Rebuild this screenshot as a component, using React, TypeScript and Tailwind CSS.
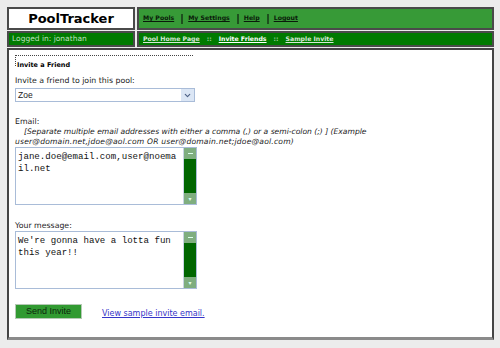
import { ChevronDown } from 'lucide-react'

const navLinks = ['My Pools', 'My Settings', 'Help', 'Logout']

function FakeScrollbar() {
  return (
    <div className="flex w-[13px] flex-col border-l border-[#c8d4e4] bg-[#006600]">
      <div className="flex h-[11px] items-center justify-center bg-[#7fae7f]">
        <div className="h-[1px] w-[5px] bg-[#dfe]" />
      </div>
      <div className="flex-1" />
      <div className="flex h-[11px] items-center justify-center bg-[#7fae7f] text-[6px] leading-none text-[#dfe]">
        ▾
      </div>
    </div>
  )
}

function FakeTextarea({ lines }: { lines: string[] }) {
  return (
    <div className="flex h-[58px] w-[182px] border border-[#a9bcd8] bg-white">
      <div className="flex-1 px-[2px] pt-[3px] font-['Liberation_Mono',monospace] text-[9.1px] leading-[11.5px] text-[#111]">
        {lines.map((l) => (
          <div key={l} className="whitespace-pre">
            {l}
          </div>
        ))}
      </div>
      <FakeScrollbar />
    </div>
  )
}

export default function App() {
  return (
    <div className="h-[348px] w-[500px] overflow-hidden bg-[#ececec] pt-[7px] pl-[7px] pr-[6px] font-['DejaVu_Sans',sans-serif]">
      <div className="flex h-[23px] gap-[2px]">
        <div className="flex w-[128px] items-center justify-center border-2 border-[#4a4a4a] bg-white">
          <span className="text-[13px] font-bold leading-none text-black">PoolTracker</span>
        </div>
        <div className="flex flex-1 items-center border-2 border-[#4a4a4a] bg-[#379a37] pl-[4px]">
          {navLinks.map((link, i) => (
            <div key={link} className="flex items-center">
              {i > 0 && <div className="ml-[7px] mr-[5px] h-[10px] w-[2px] bg-[#1e4f1e]" />}
              <a className="text-[6.2px] font-bold leading-none text-[#0a1a0a] underline">{link}</a>
            </div>
          ))}
        </div>
      </div>

      <div className="mt-[1px] flex h-[16px] gap-[2px]">
        <div className="flex w-[128px] items-center border-2 border-[#4a4a4a] bg-[#007a00] pl-[3px]">
          <span className="text-[7.5px] leading-none text-[#bfe0bf]">Logged in: jonathan</span>
        </div>
        <div className="flex flex-1 items-center gap-[7px] border-2 border-[#4a4a4a] bg-[#007a00] pl-[4px] text-[6.2px] font-bold leading-none">
          <a className="text-[#d8e8d8] underline">Pool Home Page</a>
          <span className="text-[#9ccc9c]">::</span>
          <a className="text-white underline">Invite Friends</a>
          <span className="text-[#9ccc9c]">::</span>
          <a className="text-[#d8e8d8] underline">Sample Invite</a>
        </div>
      </div>

      <div className="mt-[1px] h-[292px] border-2 border-b-[3px] border-[#444] border-b-[#8a8a8a] bg-white pl-[6px] pt-[5px] text-[#222]">
        <div className="h-[11px] w-[178px] border-t border-l border-dotted border-[#444] pl-[1px] pt-[1px] leading-[9px]">
          <span className="text-[6.5px] font-bold text-black">Invite a Friend</span>
        </div>

        <div className="mt-[9px] text-[7.8px] leading-[11px]">Invite a friend to join this pool:</div>
        <div className="mt-[2px] flex h-[14px] w-[180px] items-center border border-[#a9bcd8] bg-white">
          <span className="flex-1 pl-[2px] font-['Liberation_Sans',sans-serif] text-[8.5px] leading-none">Zoe</span>
          <div className="flex h-full w-[13px] items-center justify-center bg-[#dbe6f5]">
            <ChevronDown className="h-[9px] w-[9px] text-[#4d6185]" strokeWidth={3} />
          </div>
        </div>

        <div className="mt-[14px] text-[7.8px] leading-[11px]">Email:</div>
        <div className="pl-[9px] text-[7.6px] italic leading-[10px]">
          [Separate multiple email addresses with either a comma (,) or a semi-colon (;) ] (Example
        </div>
        <div className="text-[7.6px] italic leading-[10px] tracking-[0.2px]">
          user@domain.net,jdoe@aol.com OR user@domain.net;jdoe@aol.com)
        </div>
        <FakeTextarea lines={['jane.doe@email.com,user@noema', 'il.net']} />

        <div className="mt-[15px] text-[7.8px] leading-[11px]">Your message:</div>
        <FakeTextarea lines={["We're gonna have a lotta fun", 'this year!!']} />

        <div className="mt-[15px] flex items-center">
          <button className="h-[15px] w-[67px] border border-[#b5c9b5] bg-[#319a31] font-['Liberation_Sans',sans-serif] text-[9px] leading-none text-[#0d260d]">
            Send Invite
          </button>
          <a className="ml-[20px] mt-[4px] text-[8px] leading-none text-[#3535c8] underline">View sample invite email.</a>
        </div>
      </div>
    </div>
  )
}
